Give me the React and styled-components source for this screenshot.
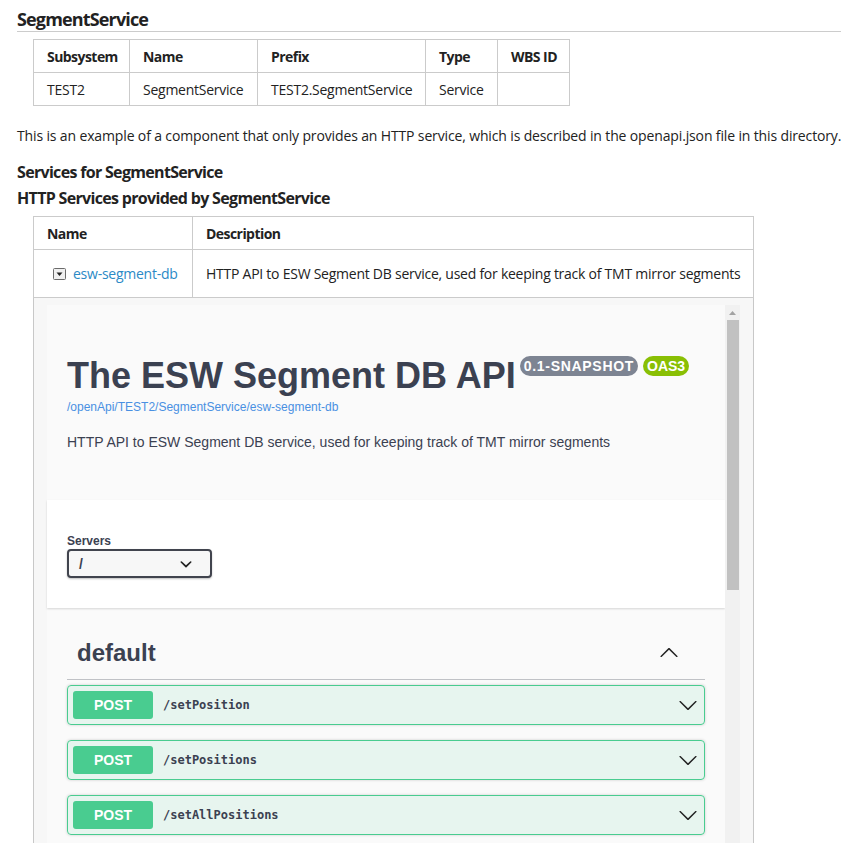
import React from 'react'
import styled, { createGlobalStyle } from 'styled-components'

const GlobalStyle = createGlobalStyle`
  html, body {
    margin: 0;
    padding: 0;
    overflow: hidden;
    background: #fff;
  }
  body {
    font-family: "Open Sans", "Noto Sans", sans-serif;
    color: #222;
  }
`;

const Page = styled.div`
  padding-left: 17px;
`;

const Title = styled.h2`
  margin: 7px 0 0;
  font-size: 18px;
  line-height: 24px;
  font-weight: 700;
  letter-spacing: -0.85px;
  border-bottom: 1px solid #ccc;
`;

const Table = styled.table`
  margin: ${({ top }) => top}px 0 0 16px;
  width: ${({ w }) => w}px;
  border-collapse: collapse;
  table-layout: fixed;
  font-size: 14px;
  letter-spacing: -0.25px;
`;

const Th = styled.th`
  border: 1px solid #cbcbcb;
  height: 33px;
  padding: 0 0 0 13px;
  text-align: left;
  font-weight: 700;
  letter-spacing: -0.55px;
  box-sizing: border-box;
`;

const Td = styled.td`
  border: 1px solid #cbcbcb;
  height: ${({ h }) => h || 33}px;
  padding: 0 0 0 13px;
  box-sizing: border-box;
  white-space: nowrap;
`;

const Para = styled.p`
  margin: 20px 0 0;
  font-size: 14px;
  line-height: 20px;
  letter-spacing: -0.14px;
  white-space: nowrap;
`;

const SubHead = styled.div`
  font-size: 16px;
  font-weight: 700;
  line-height: 22px;
  letter-spacing: -0.68px;
  margin-top: ${({ top }) => top}px;
`;

const NameCell = styled.div`
  display: flex;
  align-items: center;
  gap: 7px;
  padding-left: 6px;
`;

const Link = styled.a`
  color: #2b8ac6;
  text-decoration: none;
`;

/* swagger frame */
const Frame = styled.div`
  margin-left: 16px;
  width: 721px;
  height: 560px;
  box-sizing: border-box;
  border-left: 1px solid #c8c8c8;
  border-right: 1px solid #c8c8c8;
  background: #f7f7f7;
  display: flex;
  padding: 7px 13px 0 13px;
`;

const Swagger = styled.div`
  width: 678px;
  background: #fafafa;
  font-family: "Liberation Sans", Arial, sans-serif;
  color: #3b4151;
`;

const Scrollbar = styled.div`
  width: 15px;
  background: #f1f1f1;
  display: flex;
  flex-direction: column;
  align-items: center;
`;

const ScrollArrow = styled.div`
  height: 15px;
  display: flex;
  align-items: center;
  justify-content: center;
`;

const Thumb = styled.div`
  width: 12px;
  height: 270px;
  background: #c1c1c1;
`;

const Info = styled.div`
  padding: 50px 20px 48px;
`;

const TitleRow = styled.div`
  display: flex;
  align-items: flex-start;
`;

const ApiTitle = styled.h2`
  margin: 0;
  font-size: 36px;
  line-height: 41px;
  font-weight: 700;
  color: #3b4151;
`;

const Badge = styled.span`
  margin: 1px 0 0 ${({ ml }) => ml}px;
  padding: 2px 4px;
  border-radius: 57px;
  background: ${({ bg }) => bg};
  color: #fff;
  font-size: 14px;
  line-height: 16px;
  font-weight: 700;
  letter-spacing: ${({ ls }) => ls || 0}px;
`;

const BaseUrl = styled.div`
  margin-top: 3px;
  font-size: 12px;
  line-height: 16px;
  color: #4990e2;
`;

const Desc = styled.p`
  margin: 17px 0 0;
  font-size: 14px;
  line-height: 20px;
`;

const Schemes = styled.div`
  background: #fff;
  box-shadow: 0 1px 2px 0 rgba(0, 0, 0, 0.15);
  padding: 33px 20px 30px;
`;

const Label = styled.div`
  font-size: 12px;
  line-height: 16px;
  font-weight: 700;
`;

const Select = styled.div`
  width: 145px;
  height: 29px;
  box-sizing: border-box;
  border: 2px solid #41444e;
  border-radius: 4px;
  background: #f7f7f7;
  box-shadow: 0 1px 2px 0 rgba(0, 0, 0, 0.25);
  display: flex;
  align-items: center;
  justify-content: space-between;
  padding: 0 12px 0 10px;
  font-size: 14px;
  font-weight: 700;
`;

const TagSection = styled.div`
  padding: 0 20px;
`;

const TagHeader = styled.div`
  display: flex;
  align-items: center;
  justify-content: space-between;
  padding: 31px 25px 12px 10px;
  border-bottom: 1px solid rgba(59, 65, 81, 0.3);
`;

const TagName = styled.h3`
  margin: 0;
  font-size: 24px;
  line-height: 28px;
  font-weight: 700;
`;

const OpList = styled.div`
  padding-top: 5px;
`;

const OpBlock = styled.div`
  display: flex;
  align-items: center;
  padding: 5px;
  margin-bottom: 15px;
  border: 1px solid #49cc90;
  border-radius: 4px;
  background: rgba(73, 204, 144, 0.1);
  box-shadow: 0 0 3px rgba(0, 0, 0, 0.19);
`;

const Method = styled.span`
  min-width: 80px;
  padding: 6px 0;
  border-radius: 3px;
  background: #49cc90;
  color: #fff;
  text-align: center;
  font-size: 14px;
  line-height: 16px;
  font-weight: 700;
`;

const OpPath = styled.span`
  flex: 1;
  margin-left: 10px;
  font-family: "DejaVu Sans Mono", monospace;
  font-size: 12px;
  font-weight: 700;
  color: #3b4151;
`;

const Arrow = ({ up, size = 20 }) => (
  <svg width={size} height={size} viewBox="0 0 20 20" style={{ transform: up ? 'rotate(180deg)' : 'none', marginRight: 1 }}>
    <path fill="#222" d="M17.418 6.109c.272-.268.709-.268.979 0s.271.701 0 .969l-7.908 7.83c-.27.268-.707.268-.979 0l-7.908-7.83c-.27-.268-.27-.701 0-.969.271-.268.709-.268.979 0L10 13.25l7.418-7.141z" />
  </svg>
);

const SmallArrow = () => (
  <svg width="24" height="24" viewBox="0 0 20 20">
    <path fill="#222" d="M13.418 7.859a.695.695 0 01.978 0 .68.68 0 010 .969l-3.908 3.83a.697.697 0 01-.979 0l-3.908-3.83a.68.68 0 010-.969.695.695 0 01.978 0L10 11l3.418-3.141z" />
  </svg>
);

const Disclosure = () => (
  <svg width="13" height="12" viewBox="0 0 13 12">
    <rect x="0.5" y="0.5" width="12" height="11" rx="1" fill="#f0f0f0" stroke="#6b6b6b" />
    <path d="M3.5 4.5h6l-3 3.5z" fill="#222" />
  </svg>
);

const ops = ['/setPosition', '/setPositions', '/setAllPositions'];

function App() {
  return (
    <Page>
      <GlobalStyle />
      <Title>SegmentService</Title>
      <Table top={7} w={537}>
        <colgroup>
          <col style={{ width: 96 }} />
          <col style={{ width: 128 }} />
          <col style={{ width: 168 }} />
          <col style={{ width: 72 }} />
          <col style={{ width: 72 }} />
        </colgroup>
        <thead>
          <tr>
            <Th>Subsystem</Th>
            <Th>Name</Th>
            <Th>Prefix</Th>
            <Th>Type</Th>
            <Th>WBS ID</Th>
          </tr>
        </thead>
        <tbody>
          <tr>
            <Td>TEST2</Td>
            <Td>SegmentService</Td>
            <Td>TEST2.SegmentService</Td>
            <Td>Service</Td>
            <Td></Td>
          </tr>
        </tbody>
      </Table>
      <Para>This is an example of a component that only provides an HTTP service, which is described in the openapi.json file in this directory.</Para>
      <SubHead top={15}>Services for SegmentService</SubHead>
      <SubHead top={4}>HTTP Services provided by SegmentService</SubHead>
      <Table top={7} w={720}>
        <colgroup>
          <col style={{ width: 159 }} />
          <col style={{ width: 561 }} />
        </colgroup>
        <thead>
          <tr>
            <Th>Name</Th>
            <Th>Description</Th>
          </tr>
        </thead>
        <tbody>
          <tr>
            <Td h={48}>
              <NameCell>
                <Disclosure />
                <Link>esw-segment-db</Link>
              </NameCell>
            </Td>
            <Td h={48}>HTTP API to ESW Segment DB service, used for keeping track of TMT mirror segments</Td>
          </tr>
        </tbody>
      </Table>
      <Frame>
        <Swagger>
          <Info>
            <TitleRow>
              <ApiTitle>The ESW Segment DB API</ApiTitle>
              <Badge ml={4} ls={0.7} bg="#7d8492">0.1-SNAPSHOT</Badge>
              <Badge ml={5} bg="#89bf04">OAS3</Badge>
            </TitleRow>
            <BaseUrl>/openApi/TEST2/SegmentService/esw-segment-db</BaseUrl>
            <Desc>HTTP API to ESW Segment DB service, used for keeping track of TMT mirror segments</Desc>
          </Info>
          <Schemes>
            <Label>Servers</Label>
            <Select>
              <span>/</span>
              <SmallArrow />
            </Select>
          </Schemes>
          <TagSection>
            <TagHeader>
              <TagName>default</TagName>
              <Arrow up />
            </TagHeader>
            <OpList>
              {ops.map((p) => (
                <OpBlock key={p}>
                  <Method>POST</Method>
                  <OpPath>{p}</OpPath>
                  <Arrow />
                </OpBlock>
              ))}
            </OpList>
          </TagSection>
        </Swagger>
        <Scrollbar>
          <ScrollArrow>
            <svg width="7" height="4" viewBox="0 0 7 4"><path d="M0 4L3.5 0L7 4z" fill="#a3a3a3" /></svg>
          </ScrollArrow>
          <Thumb />
        </Scrollbar>
      </Frame>
    </Page>
  )
}

export default App
